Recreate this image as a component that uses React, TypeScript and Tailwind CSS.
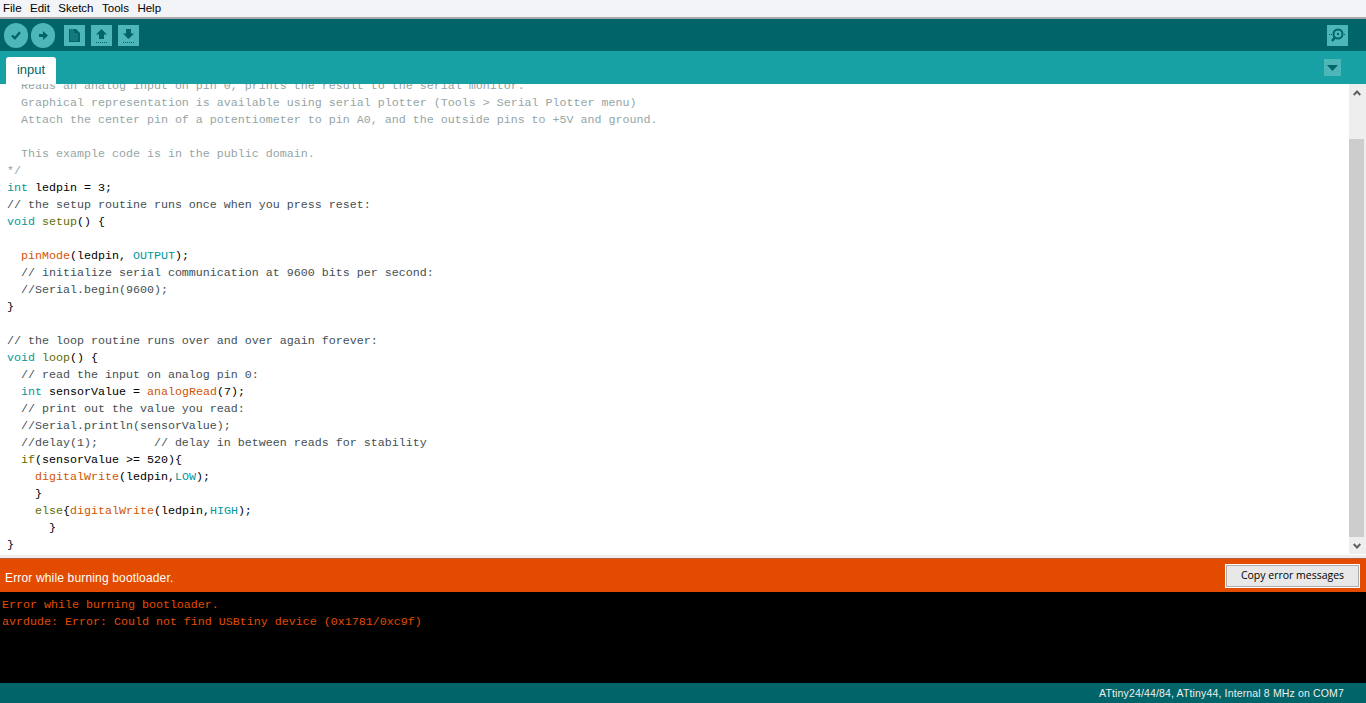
const mono = "font-['Liberation_Mono','Courier_New',monospace]"

const COMMENT = 'text-[#434f54]'
const BLOCK = 'text-[#95a5a6]'
const TYPE = 'text-[#00979c]'
const FUNC = 'text-[#d35400]'
const STRUCT = 'text-[#5e6d03]'

type Seg = [string, string?]

const lines: Seg[][] = [
  [['  Reads an analog input on pin 0, prints the result to the serial monitor.', BLOCK]],
  [['  Graphical representation is available using serial plotter (Tools > Serial Plotter menu)', BLOCK]],
  [['  Attach the center pin of a potentiometer to pin A0, and the outside pins to +5V and ground.', BLOCK]],
  [],
  [['  This example code is in the public domain.', BLOCK]],
  [['*/', BLOCK]],
  [['int', TYPE], [' ledpin = 3;']],
  [['// the setup routine runs once when you press reset:', COMMENT]],
  [['void', TYPE], [' '], ['setup', STRUCT], ['() {']],
  [],
  [['  '], ['pinMode', FUNC], ['(ledpin, '], ['OUTPUT', TYPE], [');']],
  [['  // initialize serial communication at 9600 bits per second:', COMMENT]],
  [['  //Serial.begin(9600);', COMMENT]],
  [['}']],
  [],
  [['// the loop routine runs over and over again forever:', COMMENT]],
  [['void', TYPE], [' '], ['loop', STRUCT], ['() {']],
  [['  // read the input on analog pin 0:', COMMENT]],
  [['  '], ['int', TYPE], [' sensorValue = '], ['analogRead', FUNC], ['(7);']],
  [['  // print out the value you read:', COMMENT]],
  [['  //Serial.println(sensorValue);', COMMENT]],
  [['  //delay(1);        // delay in between reads for stability', COMMENT]],
  [['  '], ['if', STRUCT], ['(sensorValue >= 520){']],
  [['    '], ['digitalWrite', FUNC], ['(ledpin,'], ['LOW', TYPE], [');']],
  [['    }']],
  [['    '], ['else', STRUCT], ['{'], ['digitalWrite', FUNC], ['(ledpin,'], ['HIGH', TYPE], [');']],
  [['      }']],
  [['}']],
]

function ToolCircle({ children }: { children: React.ReactNode }) {
  return (
    <div className="w-[24px] h-[25px] rounded-full bg-[#4db6b9] flex items-center justify-center">
      {children}
    </div>
  )
}

function ToolSquare({ children }: { children: React.ReactNode }) {
  return <div className="w-[21px] h-[21px] bg-[#4db6b9] flex items-center justify-center">{children}</div>
}

export default function App() {
  return (
    <div className="w-[1366px] h-[703px] flex flex-col overflow-hidden bg-white font-['Liberation_Sans',Arial,sans-serif]">
      {/* Menu bar */}
      <div className="h-[19px] shrink-0 bg-[#f3f4f8] border-b-2 border-[#a9a9a9] flex items-start pl-[3px] gap-[8.5px] text-[11.5px] leading-[16px] text-black">
        <span>File</span>
        <span>Edit</span>
        <span>Sketch</span>
        <span>Tools</span>
        <span>Help</span>
      </div>

      {/* Toolbar */}
      <div className="h-[32px] shrink-0 bg-[#006468] flex items-center pt-[1px] pl-[4px] pr-[18px]">
        <ToolCircle>
          <svg width="10" height="9" viewBox="0 0 10 9">
            <path d="M1 4.5 L3.8 7.2 L9 1.2" fill="none" stroke="#006468" strokeWidth="2.4" />
          </svg>
        </ToolCircle>
        <div className="ml-[3px]">
          <ToolCircle>
            <svg width="9" height="9" viewBox="0 0 9 9">
              <path d="M0 3 H4 V0 L9 4.5 L4 9 V6 H0 Z" fill="#006468" />
            </svg>
          </ToolCircle>
        </div>
        <div className="ml-[9px] flex gap-[6px]">
          <ToolSquare>
            <svg width="11" height="13" viewBox="0 0 11 13">
              <path d="M0 0 H7 L11 4 V13 H0 Z" fill="#006468" />
              <path d="M1.5 5 H9.5 M1.5 7 H9.5 M1.5 9 H9.5 M1.5 11 H9.5 M1.5 3 H5.5 M1.5 1 H5.5" stroke="#4db6b9" strokeWidth="1" strokeDasharray="1 1" />
            </svg>
          </ToolSquare>
          <ToolSquare>
            <svg width="11" height="14" viewBox="0 0 11 14">
              <path d="M5.5 0 L11 5.5 H8 V10 H3 V5.5 H0 Z" fill="#006468" />
              <path d="M0 13.5 H11" stroke="#006468" strokeDasharray="1 1" />
            </svg>
          </ToolSquare>
          <ToolSquare>
            <svg width="11" height="14" viewBox="0 0 11 14">
              <path d="M3 0 H8 V4.5 H11 L5.5 10 L0 4.5 H3 Z" fill="#006468" />
              <path d="M0 13.5 H11" stroke="#006468" strokeDasharray="1 1" />
            </svg>
          </ToolSquare>
        </div>
        <div className="ml-auto">
          <ToolSquare>
            <svg width="17" height="15" viewBox="0 0 17 15">
              <circle cx="9" cy="6" r="4.5" fill="none" stroke="#006468" strokeWidth="2" />
              <rect x="8" y="5" width="2" height="2" fill="#006468" />
              <path d="M5.8 9.5 L3 13" stroke="#006468" strokeWidth="2.6" />
              <path d="M0 6.5 H3 M15 6.5 H17" stroke="#006468" strokeDasharray="1 1" />
            </svg>
          </ToolSquare>
        </div>
      </div>

      {/* Tab bar */}
      <div className="h-[33px] shrink-0 bg-[#17a1a5] flex items-end pl-[6px] pr-[25px]">
        <div className="w-[50px] h-[27px] bg-white rounded-t-[3px] text-center text-[#006468] text-[13px] leading-[26px]">
          input
        </div>
        <div className="ml-auto self-center w-[17px] h-[17px] bg-[#4db6b9] flex items-center justify-center">
          <svg width="11" height="6" viewBox="0 0 11 6">
            <path d="M0 0 H11 L5.5 6 Z" fill="#006468" />
          </svg>
        </div>
      </div>

      {/* Editor */}
      <div className="h-[471px] shrink-0 flex bg-white">
        <div className={`flex-1 overflow-hidden pl-[7px] text-[11.67px] leading-[17px] text-black ${mono}`}>
          <div className="-mt-[6px] whitespace-pre">
            {lines.map((segs, i) => (
              <div key={i} className="h-[17px]">
                {segs.map(([t, c], j) => (
                  <span key={j} className={c}>
                    {t}
                  </span>
                ))}
              </div>
            ))}
          </div>
        </div>
        <div className="w-[17px] mb-px flex flex-col bg-[#eeeeee]">
          <div className="h-[17px] pr-[2px] flex items-center justify-center">
            <svg width="8" height="6" viewBox="0 0 8 6">
              <path d="M0.7 5 L4 1.5 L7.3 5" fill="none" stroke="#606060" strokeWidth="2" />
            </svg>
          </div>
          <div className="h-[38px]" />
          <div className="h-[398px] mr-[2px] bg-[#cdcdcd]" />
          <div className="h-[17px] pr-[2px] flex items-center justify-center">
            <svg width="8" height="6" viewBox="0 0 8 6">
              <path d="M0.7 1 L4 4.5 L7.3 1" fill="none" stroke="#606060" strokeWidth="2" />
            </svg>
          </div>
        </div>
      </div>

      {/* Divider */}
      <div className="h-[3px] shrink-0 bg-[#eeeeee]" />

      {/* Status bar */}
      <div className="h-[34px] shrink-0 bg-[#e34c00] border-t border-[#b5603a] flex items-center justify-between pl-[5px] pr-[7px]">
        <span className="pt-[5px] text-white text-[12px] tracking-[0.16px]">Error while burning bootloader.</span>
        <button className="w-[133px] h-[22px] bg-[#e8e8e8] border border-[#adadad] outline outline-1 outline-white text-[10.5px] text-black font-['Open_Sans','Liberation_Sans',sans-serif]">
          Copy error messages
        </button>
      </div>

      {/* Console */}
      <div className={`h-[91px] shrink-0 bg-black pl-[2px] pt-[5px] text-[11.67px] leading-[17px] text-[#e34c00] whitespace-pre ${mono}`}>
        <div>Error while burning bootloader.</div>
        <div>avrdude: Error: Could not find USBtiny device (0x1781/0xc9f)</div>
      </div>

      {/* Footer */}
      <div className="flex-1 bg-[#006468] flex items-center justify-end pt-[1px] pr-[22px] text-[#eeeeee] text-[10.5px] tracking-[0.15px]">
        ATtiny24/44/84, ATtiny44, Internal 8 MHz on COM7
      </div>
    </div>
  )
}
